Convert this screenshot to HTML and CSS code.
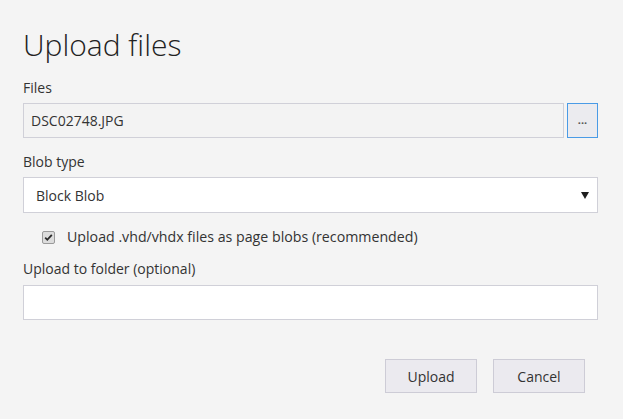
FILE: index.html
```html
<!DOCTYPE html>
<html>
<head>
<meta charset="utf-8">
<link rel="stylesheet" href="styles.css">
</head>
<body>
<div class="dialog">
  <h1 class="title">Upload files</h1>
  <label class="label label-first">Files</label>
  <div class="file-row">
    <div class="input input-readonly">DSC02748.JPG</div>
    <button class="browse">...</button>
  </div>
  <label class="label">Blob type</label>
  <div class="select">
    <span class="select-text">Block Blob</span>
    <svg class="select-arrow" width="8" height="7" viewBox="0 0 8 7"><path d="M0 0H8L4 7Z" fill="#1e1e1e"/></svg>
  </div>
  <div class="check-row">
    <span class="checkbox">
      <svg width="13" height="13" viewBox="0 0 13 13">
        <rect x="0.5" y="0.5" width="12" height="12" rx="1.5" fill="#dcdcdc" stroke="#9a9a9a"/>
        <path d="M3.2 6.6L5.3 8.8L9.8 3.8" fill="none" stroke="#2a2a2a" stroke-width="1.8"/>
      </svg>
    </span>
    <span class="check-text">Upload .vhd/vhdx files as page blobs (recommended)</span>
  </div>
  <label class="label label-folder">Upload to folder (optional)</label>
  <div class="input input-white"></div>
  <div class="actions">
    <button class="btn">Upload</button>
    <button class="btn">Cancel</button>
  </div>
</div>
</body>
</html>
```
FILE: styles.css
```css
* { box-sizing: border-box; }
html, body {
  margin: 0;
  padding: 0;
  background: #f4f4f4;
}
body {
  font-family: "Open Sans", "Noto Sans", sans-serif;
  color: #333;
}
.dialog {
  padding: 27px 25px 0 23px;
  display: flex;
  flex-direction: column;
}
.title {
  margin: 0;
  font-size: 30px;
  font-weight: 300;
  line-height: 36px;
  color: #222;
}
.label {
  display: block;
  font-size: 14px;
  line-height: 20px;
  margin-top: 14px;
  margin-bottom: 5px;
  color: #333;
}
.label-first { margin-top: 15px; }
.label-folder { margin-top: 12px; margin-bottom: 6px; }
.file-row {
  display: flex;
  gap: 3px;
}
.input {
  height: 35px;
  border: 1px solid #d0d0d8;
  font-size: 14px;
  line-height: 33px;
  padding: 0 7px;
}
.input-readonly {
  flex: 1;
  background: #f3f3f3;
}
.input-white {
  background: #fff;
}
.browse {
  width: 31px;
  height: 35px;
  padding: 0 0 2px;
  border: 1px solid #4a9be6;
  background: #ebebef;
  color: #555;
  font-family: inherit;
  font-size: 11px;
  font-weight: 700;
  line-height: 1;
}
.select {
  height: 36px;
  border: 1px solid #d0d0d8;
  background: #fff;
  display: flex;
  align-items: center;
  justify-content: space-between;
  padding: 0 8px 0 12px;
  font-size: 14px;
}
.check-row {
  display: flex;
  align-items: center;
  gap: 12px;
  padding-left: 19px;
  margin-top: 14px;
  font-size: 14px;
  line-height: 20px;
  height: 20px;
}
.checkbox {
  display: flex;
  width: 13px;
  height: 13px;
}
.check-text {
  font-size: 14.2px;
}
.actions {
  display: flex;
  justify-content: flex-end;
  gap: 16px;
  margin-top: 39px;
  padding-right: 13px;
}
.btn {
  width: 92px;
  height: 34px;
  border: 1px solid #cdccd6;
  background: #ebeaef;
  color: #333;
  font-family: inherit;
  font-size: 14px;
  padding: 0;
}
```
